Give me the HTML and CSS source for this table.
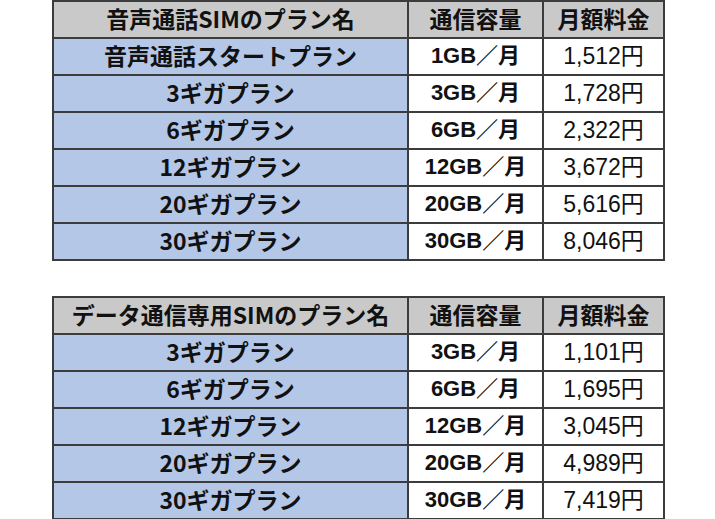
FILE: index.html
```html
<!DOCTYPE html>
<html lang="ja">
<head>
<meta charset="utf-8">
<link rel="stylesheet" href="styles.css">
</head>
<body>
<div class="page">
  <table class="plans">
    <colgroup><col class="c1"><col class="c2"><col class="c3"></colgroup>
    <tr class="head"><th>音声通話SIMのプラン名</th><th>通信容量</th><th>月額料金</th></tr>
    <tr><td class="name">音声通話スタートプラン</td><td class="cap">1GB／月</td><td class="price">1,512円</td></tr>
    <tr><td class="name">3ギガプラン</td><td class="cap">3GB／月</td><td class="price">1,728円</td></tr>
    <tr><td class="name">6ギガプラン</td><td class="cap">6GB／月</td><td class="price">2,322円</td></tr>
    <tr><td class="name">12ギガプラン</td><td class="cap">12GB／月</td><td class="price">3,672円</td></tr>
    <tr><td class="name">20ギガプラン</td><td class="cap">20GB／月</td><td class="price">5,616円</td></tr>
    <tr><td class="name">30ギガプラン</td><td class="cap">30GB／月</td><td class="price">8,046円</td></tr>
  </table>
  <table class="plans">
    <colgroup><col class="c1"><col class="c2"><col class="c3"></colgroup>
    <tr class="head"><th>データ通信専用SIMのプラン名</th><th>通信容量</th><th>月額料金</th></tr>
    <tr><td class="name">3ギガプラン</td><td class="cap">3GB／月</td><td class="price">1,101円</td></tr>
    <tr><td class="name">6ギガプラン</td><td class="cap">6GB／月</td><td class="price">1,695円</td></tr>
    <tr><td class="name">12ギガプラン</td><td class="cap">12GB／月</td><td class="price">3,045円</td></tr>
    <tr><td class="name">20ギガプラン</td><td class="cap">20GB／月</td><td class="price">4,989円</td></tr>
    <tr><td class="name">30ギガプラン</td><td class="cap">30GB／月</td><td class="price">7,419円</td></tr>
  </table>
</div>
</body>
</html>
```
FILE: styles.css
```css
html, body {
  margin: 0;
  padding: 0;
  background: #ffffff;
}

.page {
  display: flex;
  flex-direction: column;
  gap: 35px;
  padding-left: 52px;
  padding-top: 0;
}

.plans {
  border-collapse: collapse;
  width: 611px;
  table-layout: fixed;
  color: #111111;
  font-family: "Noto Sans CJK JP", sans-serif;
  font-size: 23px;
}

.c1 { width: 355px; }
.c2 { width: 135px; }
.c3 { width: 121px; }

.plans tr {
  height: 37px;
}

.plans th,
.plans td {
  border: 2px solid #3c3c3c;
  padding: 0 0 3px 0;
  text-align: center;
  vertical-align: middle;
  line-height: 1;
  white-space: nowrap;
}

.plans th {
  background: #c9c9c9;
  font-weight: 700;
}

.plans .name {
  background: #b4c7e7;
  font-weight: 700;
}

.plans .cap {
  background: #ffffff;
  font-family: "Liberation Sans", "Noto Sans CJK JP", sans-serif;
  font-size: 22px;
  font-weight: 700;
  padding-bottom: 1px;
}

.plans .price {
  background: #ffffff;
  font-family: "Liberation Sans", "Noto Sans CJK JP", sans-serif;
  font-weight: 400;
  font-size: 23px;
  padding-bottom: 1px;
}
```
